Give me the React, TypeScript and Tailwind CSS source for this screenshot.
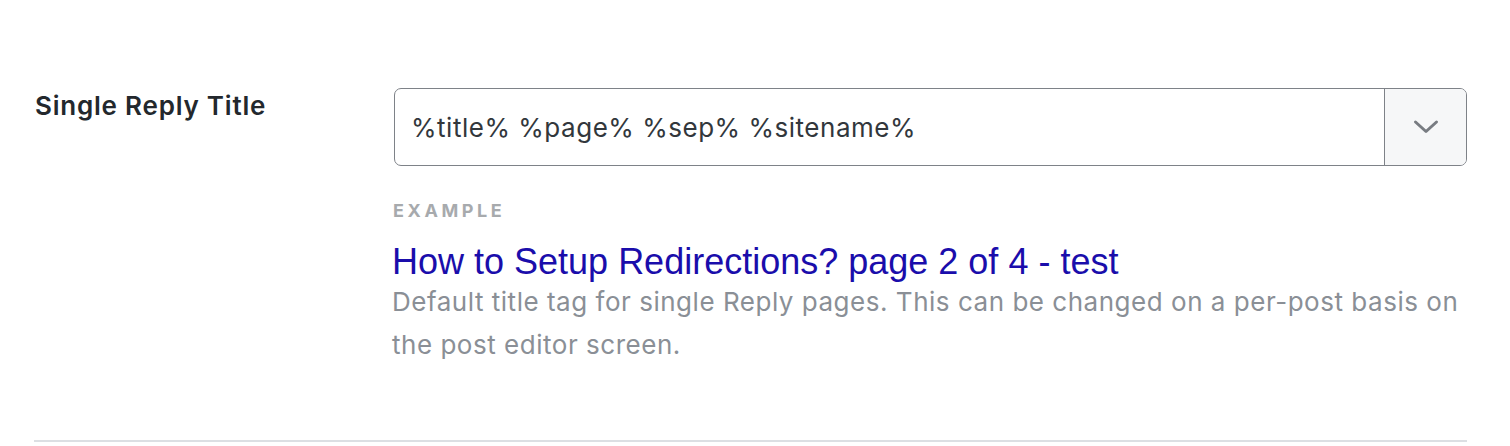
import React from "react";

export default function App() {
  return (
    <div className="w-[1510px] h-[446px] bg-white overflow-hidden" style={{ fontFamily: "Inter, 'Noto Sans', sans-serif" }}>
      <div className="ml-[34px] w-[1433px] pt-[88px] pb-[74px] border-b-2 border-[#dcdfe3] flex">
        <div className="w-[360px] shrink-0 pl-[1px] pt-[3px]">
          <div className="text-[26px] leading-[30px] font-semibold tracking-[0.03em] text-[#23282d] whitespace-nowrap">Single Reply Title</div>
        </div>
        <div className="flex-1 min-w-0">
          <div className="flex h-[78px] border border-[#7e8288] rounded-[7px] overflow-hidden">
            <div className="flex-1 flex items-center pl-[16px] text-[26px] tracking-[0.02em] text-[#32373c]">
              %title% %page% %sep% %sitename%
            </div>
            <div className="w-[82px] shrink-0 border-l border-[#7e8288] bg-[#f6f7f8] flex items-center justify-center">
              <svg width="28" height="18" viewBox="0 0 28 18" fill="none">
                <path d="M3.5 4 L14 13.5 L24.5 4" stroke="#787c82" strokeWidth="3" strokeLinecap="round" strokeLinejoin="round" />
              </svg>
            </div>
          </div>
          <div className="ml-[-1px] mt-[35px] text-[18px] leading-[20px] font-bold tracking-[0.2em] text-[#a7aaad]">EXAMPLE</div>
          <div
            className="ml-[-2px] mt-[23px] text-[36px] leading-[36px] text-[#1a0dab] whitespace-nowrap"
            style={{ fontFamily: "'Liberation Sans', Arial, sans-serif" }}
          >
            How to Setup Redirections? page 2 of 4 - test
          </div>
          <div className="ml-[-2px] mr-[-20px] text-[26px] leading-[43px] tracking-[0.02em] text-[#8a8f96]">
            Default title tag for single Reply pages. This can be changed on a per-post basis on the post editor screen.
          </div>
        </div>
      </div>
    </div>
  );
}
